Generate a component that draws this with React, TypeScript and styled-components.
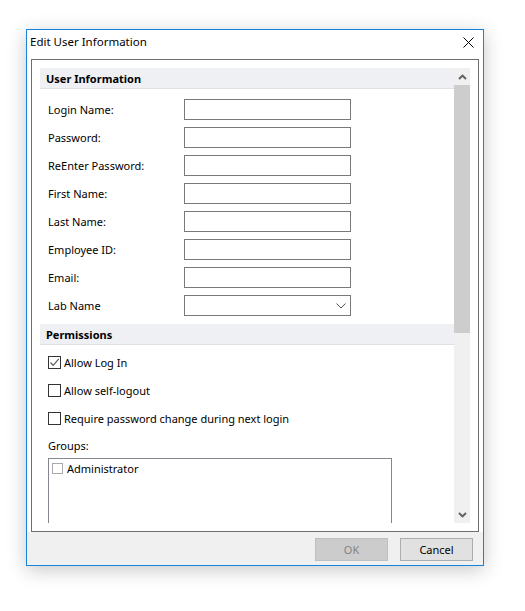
import React from "react";
import styled, { createGlobalStyle } from "styled-components";

const GlobalStyle = createGlobalStyle`
  html, body { margin: 0; padding: 0; background: #ffffff; }
  body { font-family: "Noto Sans", "Segoe UI", sans-serif; font-size: 11px; color: #000; }
  * { box-sizing: border-box; }
`;

const Page = styled.div`
  padding: 29px 0 0 26px;
  width: 525px;
  height: 611px;
`;

const Window = styled.div`
  width: 458px;
  height: 537px;
  border: 1px solid #1883d7;
  background: #ffffff;
  box-shadow: 0 4px 18px rgba(0, 0, 0, 0.22);
  display: flex;
  flex-direction: column;
`;

const TitleBar = styled.div`
  height: 24px;
  display: flex;
  align-items: center;
  justify-content: space-between;
  padding: 0 9px 0 3px;
  flex: none;
`;

const Title = styled.span`
  font-size: 11.5px;
  line-height: 16px;
`;

const CloseButton = styled.div`
  width: 12px;
  height: 12px;
  display: flex;
  align-items: center;
  justify-content: center;
`;

const Body = styled.div`
  flex: 1;
  padding: 5px 4px 0 4px;
  display: flex;
  min-height: 0;
`;

const Panel = styled.div`
  flex: 1;
  border: 1px solid #6e6e6e;
  padding: 8px;
  display: flex;
  min-height: 0;
`;

const ScrollContent = styled.div`
  flex: 1;
  overflow: hidden;
  display: flex;
  flex-direction: column;
`;

const SectionHeader = styled.div`
  height: 21px;
  flex: none;
  background: #eff0f3;
  border-bottom: 1px solid #dfe0e6;
  padding-left: 6px;
  display: flex;
  align-items: center;
  font-weight: 700;
`;

const FieldList = styled.div`
  display: flex;
  flex-direction: column;
  gap: 7px;
  padding: 10px 0 8px 8px;
`;

const FieldRow = styled.div`
  display: flex;
  align-items: center;
  height: 21px;
`;

const Label = styled.span`
  width: 136px;
  flex: none;
`;

const TextBox = styled.div`
  width: 167px;
  height: 21px;
  border: 1px solid #7a7a7a;
  background: #fff;
`;

const SelectBox = styled(TextBox)`
  display: flex;
  align-items: center;
  justify-content: flex-end;
  padding-right: 4px;
`;

const CheckList = styled.div`
  display: flex;
  flex-direction: column;
  gap: 7px;
  padding: 7px 0 0 8px;
`;

const CheckRow = styled.div`
  display: flex;
  align-items: center;
  height: 21px;
  gap: 3px;
`;

const Box = styled.div<{ $light?: boolean; $size: number }>`
  width: ${(p) => p.$size}px;
  height: ${(p) => p.$size}px;
  border: 1px solid ${(p) => (p.$light ? "#a9a9a9" : "#333333")};
  background: #fff;
  flex: none;
  display: flex;
  align-items: center;
  justify-content: center;
`;

const GroupsLabel = styled.div`
  padding: 9px 0 0 8px;
  line-height: 16px;
`;

const ListBox = styled.div`
  margin: 4px 0 0 8px;
  width: 344px;
  height: 90px;
  flex: none;
  border: 1px solid #828790;
  padding: 1px 3px;
`;

const ListItem = styled.div`
  display: flex;
  align-items: center;
  gap: 4px;
  height: 16px;
`;

const ScrollBar = styled.div`
  width: 16px;
  flex: none;
  background: #f0f0f0;
  display: flex;
  flex-direction: column;
`;

const ScrollArrow = styled.div`
  height: 17px;
  flex: none;
  display: flex;
  align-items: center;
  justify-content: center;
`;

const ScrollThumb = styled.div`
  height: 248px;
  flex: none;
  background: #cdcdcd;
`;

const ScrollTrack = styled.div`
  flex: 1;
`;

const Footer = styled.div`
  height: 33px;
  flex: none;
  background: #f0f0f0;
  display: flex;
  justify-content: flex-end;
  align-items: flex-start;
  gap: 12px;
  padding: 6px 10px 0 0;
`;

const Button = styled.div<{ $disabled?: boolean }>`
  width: 73px;
  height: 23px;
  border: 1px solid ${(p) => (p.$disabled ? "#bfbfbf" : "#adadad")};
  background: ${(p) => (p.$disabled ? "#cccccc" : "#e1e1e1")};
  color: ${(p) => (p.$disabled ? "#838383" : "#000")};
  display: flex;
  align-items: center;
  justify-content: center;
`;

const fields = [
  "Login Name:",
  "Password:",
  "ReEnter Password:",
  "First Name:",
  "Last Name:",
  "Employee ID:",
  "Email:",
];

const checks = [
  { label: "Allow Log In", checked: true },
  { label: "Allow self-logout", checked: false },
  { label: "Require password change during next login", checked: false },
];

export default function App() {
  return (
    <>
      <GlobalStyle />
      <Page>
        <Window>
          <TitleBar>
            <Title>Edit User Information</Title>
            <CloseButton>
              <svg width="11" height="11" viewBox="0 0 11 11">
                <path d="M0.5 0.5 L10.5 10.5 M10.5 0.5 L0.5 10.5" stroke="#000" strokeWidth="1" />
              </svg>
            </CloseButton>
          </TitleBar>
          <Body>
            <Panel>
              <ScrollContent>
                <SectionHeader>User Information</SectionHeader>
                <FieldList>
                  {fields.map((f) => (
                    <FieldRow key={f}>
                      <Label>{f}</Label>
                      <TextBox />
                    </FieldRow>
                  ))}
                  <FieldRow>
                    <Label>Lab Name</Label>
                    <SelectBox>
                      <svg width="10" height="6" viewBox="0 0 10 6">
                        <path d="M0.5 0.5 L5 5 L9.5 0.5" stroke="#555" fill="none" strokeWidth="1" />
                      </svg>
                    </SelectBox>
                  </FieldRow>
                </FieldList>
                <SectionHeader>Permissions</SectionHeader>
                <CheckList>
                  {checks.map((c) => (
                    <CheckRow key={c.label}>
                      <Box $size={13}>
                        {c.checked && (
                          <svg width="11" height="11" viewBox="0 0 11 11">
                            <path d="M1.5 5.5 L4.2 8.3 L9.8 1.8" stroke="#5a5a5a" fill="none" strokeWidth="1.2" />
                          </svg>
                        )}
                      </Box>
                      <span>{c.label}</span>
                    </CheckRow>
                  ))}
                </CheckList>
                <GroupsLabel>Groups:</GroupsLabel>
                <ListBox>
                  <ListItem>
                    <Box $size={11} $light />
                    <span>Administrator</span>
                  </ListItem>
                </ListBox>
              </ScrollContent>
              <ScrollBar>
                <ScrollArrow>
                  <svg width="9" height="6" viewBox="0 0 9 6">
                    <path d="M1 5 L4.5 1.6 L8 5" stroke="#606060" fill="none" strokeWidth="2" />
                  </svg>
                </ScrollArrow>
                <ScrollThumb />
                <ScrollTrack />
                <ScrollArrow>
                  <svg width="9" height="6" viewBox="0 0 9 6">
                    <path d="M1 1 L4.5 4.4 L8 1" stroke="#606060" fill="none" strokeWidth="2" />
                  </svg>
                </ScrollArrow>
              </ScrollBar>
            </Panel>
          </Body>
          <Footer>
            <Button $disabled>OK</Button>
            <Button>Cancel</Button>
          </Footer>
        </Window>
      </Page>
    </>
  );
}
